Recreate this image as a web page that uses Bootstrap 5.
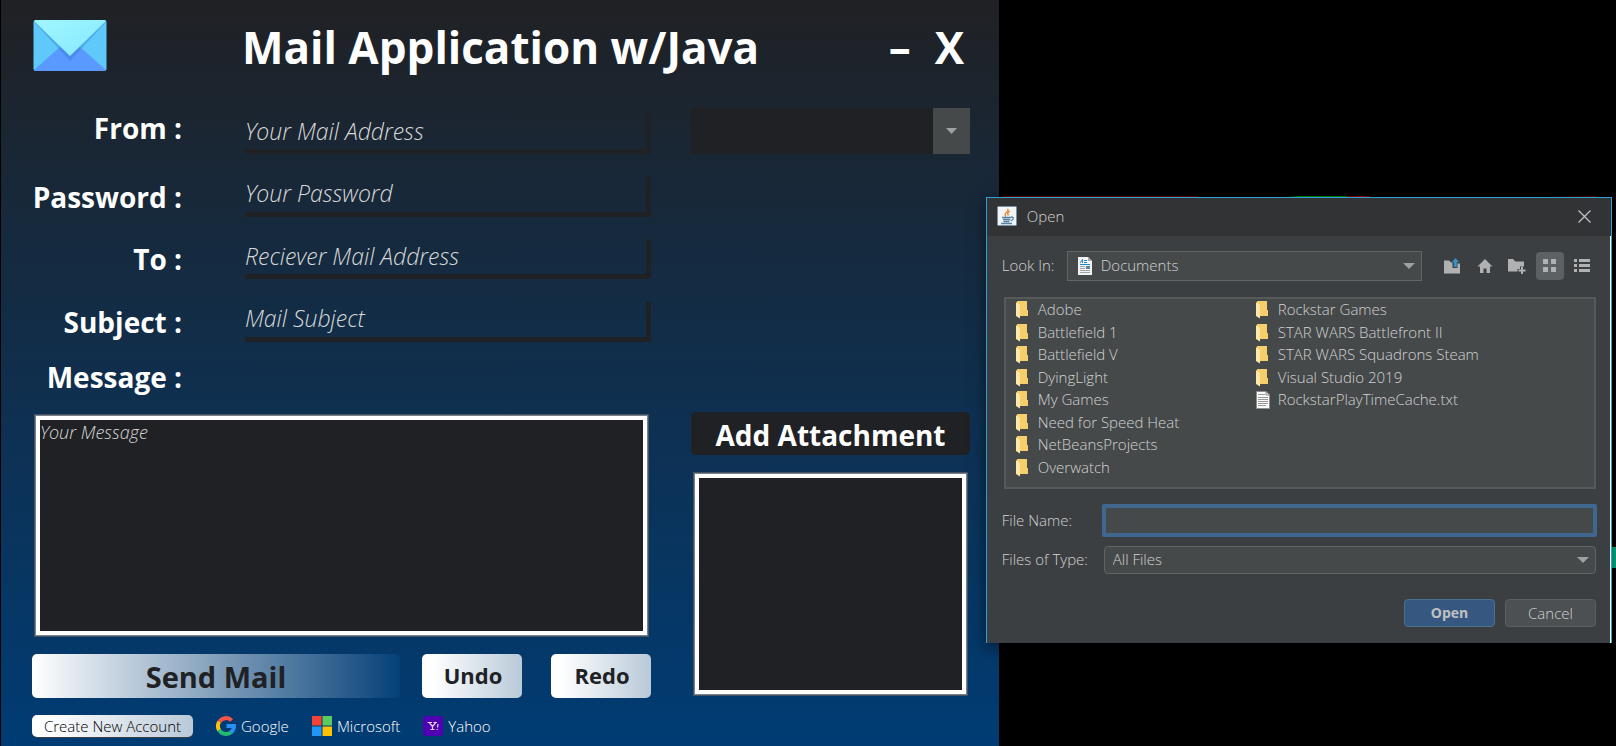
<!DOCTYPE html>
<html lang="en">
<head>
<meta charset="utf-8">
<meta name="viewport" content="width=device-width, initial-scale=1">
<title>Mail Application w/Java</title>
<link href="https://cdn.jsdelivr.net/npm/bootstrap@5.3.0/dist/css/bootstrap.min.css" rel="stylesheet">
<style>
  :root { --ink: #202124; --field: #45494a; --line: #646464; --soft: #d2d2d2; }
  body { background: #000; color: #fff; font-family: "Open Sans", "Noto Sans", sans-serif; font-size: 15px; line-height: 22px; }
  button, input, select, textarea { font-family: inherit; }

  /* Mail window */
  .mail-window { width: 61.76%; min-height: 100vh; margin-left: 1px; padding: 0 29px 8px 31px; background: linear-gradient(#202124, #003c74); }
  .title-bar { height: 92px; }
  .logo-slot { width: 210px; padding-bottom: 2px; }
  .mail-title, .win-btn { font-size: 44px; line-height: 58px; font-weight: 700; color: #fff; padding: 2px 0 0; }
  .win-btn { background: none; border: 0; }
  .min-btn { margin-right: 24px; }
  .close-btn { margin-right: 6px; }
  .form-rows { height: 234px; }
  .first-row { height: 46px; }
  .field-label { width: 150px; font-size: 28px; line-height: 40px; font-weight: 700; text-align: right; white-space: nowrap; }
  .message-label { margin: 15px 0 19px; }
  .line-input { height: 40px; margin-left: 63px; padding: 0 0 2px; background: transparent; color: #fff; border: 0 solid var(--ink); border-width: 0 5px 5px 0; font-size: 23px; font-weight: 300; font-style: italic; min-width: 0; }
  .line-input::placeholder, .message-box::placeholder { color: #d8d8d8; opacity: 1; }
  .framed { background: var(--ink); border: 4px solid #fff; border-radius: 0; box-shadow: 0 0 0 1px #77828c, 0 0 0 2px #46525f; margin: 0 4px; }
  .message-box { display: block; height: 219px; padding: 0; color: #fff; resize: none; font-size: 18px; line-height: 25px; font-weight: 300; font-style: italic; width: calc(100% - 8px); }
  .action-row { margin: 19px 0 17px; }
  .mail-btn { height: 44px; border: 0; border-radius: 5px; color: var(--ink); font-weight: 700; padding: 0; }
  .send-btn { font-size: 29px; padding-top: 2px; line-height: 42px; background: linear-gradient(to right, #fff, #054078); }
  .small-btn { width: 100px; font-size: 22px; line-height: 42px; padding: 0 0 2px 2px; background: linear-gradient(to right, #fff 10%, #b9c9d8); }
  .undo-btn { margin: 0 29px 0 22px; }
  .account-btn { width: 161px; height: 22px; padding: 0; border: 0; border-radius: 5px; color: #000; background: linear-gradient(to right, #fff 10%, #b9c9d8); box-shadow: 0 1px 0 #3c3f41; line-height: 21px; }
  .text-thin { font-size: 15px; font-weight: 300; }
  .provider-row { gap: 23px; }
  .provider { color: #fff; text-decoration: none; gap: 5px; }

  /* Side column */
  .side { width: 279px; margin-left: 40px; }
  .server-select { height: 46px; background: var(--ink); border: 0; appearance: none; color: #fff; }
  .server-arrow { width: 37px; background: var(--field); pointer-events: none; }
  .attach-btn { height: 43px; margin-top: 258px; margin-bottom: 19px; border: 0; border-radius: 5px; background: var(--ink); color: #fff; font-size: 28px; font-weight: 700; line-height: 40px; padding: 3px 0 0; }
  .attach-list { height: 220px; }

  /* File dialog */
  .open-dialog { left: 61%; right: 4px; top: 197px; border: 1px solid #2f9fd6; border-bottom: 0; color: var(--soft); background: #3c3f41; box-shadow: 0 4px 14px rgba(0, 0, 0, .5); }
  .dialog-title { height: 38px; background: #313335; padding: 0 20px 2px 10px; }
  .dialog-name { padding-left: 10px; }
  .dialog-body { padding: 15px 14px 16px 15px; border-right: 1px solid #fff; }
  .icon-btn { background: none; border: 0; padding: 0; }
  .look-label, .name-label { padding-bottom: 2px; }
  .look-label { width: 65px; }
  .dlg-select { height: 28px; background: var(--field); color: var(--soft); border: 1px solid var(--line); appearance: none; padding: 0 30px 2px 8px; }
  .look-select { height: 30px; padding-left: 33px; }
  .over-left, .over-right { top: 50%; transform: translateY(-50%); pointer-events: none; }
  .over-left { left: 11px; }
  .over-right { right: 7px; }
  .tools { width: 158px; margin-left: 16px; }
  .tool-btn { width: 28px; height: 28px; border: 0; padding: 0 0 1px; background: none; border-radius: 4px; }
  .tool-btn.chosen { background: #5c6164; }
  .file-list { height: 192px; margin: 16px 0 15px 2px; padding: 0 10px; border: 2px solid #56595a; background: var(--field); }
  .file-grid { display: grid; grid-auto-flow: column; grid-template-rows: repeat(8, 1fr); grid-template-columns: 240px 1fr; height: 180px; }
  .file-icon { width: 14px; height: 18px; margin-top: 2px; }
  .file-item { gap: 8px; line-height: 21px; white-space: nowrap; }
  .name-label { width: 100px; }
  .name-input { height: 33px; background: var(--field); border: 4px solid #3f678f; color: var(--soft); border-radius: 2px; outline: 0; margin-right: -1px; padding: 0 6px; min-width: 0; }
  .type-row { margin: 9px 0 25px; }
  .type-field { margin-left: 2px; }
  .dlg-actions { gap: 10px; }
  .dlg-btn { width: 91px; height: 28px; border: 1px solid #5e6060; border-radius: 4px; background: #4c5052; color: var(--soft); padding: 0; }
  .dlg-btn.main { background: #365880; border-color: #4c708c; color: #c0c0c0; font-weight: 700; font-size: 14px; }

  /* Slivers of the windows behind the dialog */
  .behind-top { left: 62%; right: 20px; top: 196px; height: 1px; background: linear-gradient(to right, #600 0 33%, #000 33% 48%, #080 50% 58%, #800 58% 62%, #000 62% 92%, #600); }
  .behind-side { right: 0; width: 5px; top: 547px; height: 21px; background: #00b285; }
</style>
</head>
<body>
<div class="position-relative min-vh-100 overflow-hidden">

  <main class="mail-window">
    <header class="title-bar d-flex align-items-center">
      <div class="logo-slot flex-shrink-0">
        <svg class="d-block" width="75" height="53" viewBox="0 0 75 53" aria-hidden="true">
          <defs><linearGradient id="flap" x1="0" y1="0" x2="1" y2="1"><stop offset="0" stop-color="#a0f6ff"/><stop offset="1" stop-color="#84e9ff"/></linearGradient></defs>
          <rect x="1.500" y="1" width="73" height="51" rx="2.500" fill="#5ec9fa"/>
          <path d="M2 51 28 28H48L74 51Q73 52 72 52H4Q3 52 2 51Z" fill="#5a99ff"/>
          <path d="M2 3 38 42 74 3Z" fill="#2f73c8" opacity=".35"/>
          <path d="M2 2 38 37 74 2Q73 1 72 1H4Q3 1 2 2Z" fill="url(#flap)"/>
        </svg>
      </div>
      <h1 class="mail-title m-0 flex-grow-1 text-nowrap">Mail Application w/Java</h1>
      <button class="win-btn min-btn" type="button" aria-label="Minimize">–</button>
      <button class="win-btn close-btn" type="button" aria-label="Close">X</button>
    </header>

    <div class="d-flex pt-3">
      <section class="flex-grow-1">
        <div class="form-rows d-flex flex-column justify-content-between">
          <div class="first-row d-flex">
            <label class="field-label" for="from">From :</label>
            <input class="line-input flex-grow-1 align-self-end" id="from" type="email" placeholder="Your Mail Address">
          </div>
          <div class="d-flex">
            <label class="field-label" for="pass">Password :</label>
            <input class="line-input flex-grow-1" id="pass" type="password" placeholder="Your Password">
          </div>
          <div class="d-flex">
            <label class="field-label" for="to">To :</label>
            <input class="line-input flex-grow-1" id="to" type="email" placeholder="Reciever Mail Address">
          </div>
          <div class="d-flex">
            <label class="field-label" for="subject">Subject :</label>
            <input class="line-input flex-grow-1" id="subject" type="text" placeholder="Mail Subject">
          </div>
        </div>
        <label class="field-label message-label d-block" for="message">Message :</label>
        <textarea class="framed message-box" id="message" placeholder="Your Message"></textarea>

        <div class="action-row d-flex">
          <button class="mail-btn send-btn flex-grow-1" type="button">Send Mail</button>
          <button class="mail-btn small-btn undo-btn" type="button">Undo</button>
          <button class="mail-btn small-btn" type="button">Redo</button>
        </div>

        <div class="provider-row d-flex align-items-center">
          <button class="account-btn text-thin text-nowrap" type="button">Create New Account</button>
          <a class="provider text-thin d-flex align-items-center" href="#google">
            <svg width="20" height="20" viewBox="0 0 20 20" fill="none" stroke-width="4" aria-hidden="true">
              <path d="M3.200 6A8 8 0 0 1 15.700 4.400" stroke="#f4554a"/>
              <path d="M3.200 14.200A8 8 0 0 1 3.200 5.800" stroke="#ffc107"/>
              <path d="M15.300 16A8 8 0 0 1 3.100 14" stroke="#25b876"/>
              <path d="M10.500 10H18A8 8 0 0 1 15.100 16.100" stroke="#2b90f5"/>
            </svg>Google</a>
          <a class="provider text-thin d-flex align-items-center" href="#microsoft">
            <svg width="20" height="20" viewBox="0 0 20 20" aria-hidden="true">
              <path d="M0 0H9.500V9.500H0Z" fill="#f44336"/><path d="M10.500 0H20V9.500H10.500Z" fill="#5ccb5f"/>
              <path d="M0 10.500H9.500V20H0Z" fill="#2196f3"/><path d="M10.500 10.500H20V20H10.500Z" fill="#ffc107"/>
            </svg>Microsoft</a>
          <a class="provider text-thin d-flex align-items-center" href="#yahoo">
            <svg width="20" height="20" viewBox="0 0 20 20" aria-hidden="true">
              <rect width="20" height="20" rx="3" fill="#4f00b3"/>
              <path d="M4.500 6.500H9M10.500 6.500H14M6.500 7 9.500 10.500 12.500 7M9.500 10V13.500M7.500 13.500H11.500M15 8 14.500 11.500M14.300 13V14" stroke="#e3d4f7" stroke-width="1.200" fill="none"/>
            </svg>Yahoo</a>
        </div>
      </section>

      <aside class="side flex-shrink-0">
        <div class="position-relative">
          <select class="server-select d-block w-100" aria-label="Mail server"><option></option></select>
          <span class="server-arrow position-absolute top-0 end-0 h-100 d-flex align-items-center justify-content-center">
            <svg width="11" height="6" viewBox="0 0 11 6" aria-hidden="true"><path d="M0 0H11L5.500 6Z" fill="#9da0a4"/></svg>
          </span>
        </div>
        <button class="attach-btn d-block w-100" type="button">Add Attachment</button>
        <div class="framed attach-list" role="listbox" aria-label="Attachments"></div>
      </aside>
    </div>
  </main>

  <div class="behind-top position-absolute"></div>
  <div class="behind-side position-absolute"></div>

  <section class="open-dialog position-absolute text-thin" role="dialog" aria-label="Open">
    <div class="dialog-title d-flex align-items-center">
      <svg width="20" height="20" viewBox="0 0 20 20" aria-hidden="true">
        <rect x=".5" y=".5" width="19" height="19" rx="1" fill="#f2f5f7" stroke="#7592a9"/>
        <path d="M10.500 3Q12 4.500 9.500 6.500T9 10.500M13 5Q9.500 7 11.500 9.500" stroke="#e8822d" stroke-width="1.400" fill="none"/>
        <path d="M5 11.500H14M6 13.500H13M4 17.500H15M6.500 15.500H12.500" stroke="#5382a1" stroke-width="1.500" fill="none"/>
        <path d="M14 11Q17 11 16 13T13.500 14" stroke="#5382a1" stroke-width="1.300" fill="none"/>
      </svg>
      <span class="dialog-name flex-grow-1">Open</span>
      <button class="icon-btn d-flex" type="button" aria-label="Close">
        <svg width="13" height="13" viewBox="0 0 13 13" aria-hidden="true"><path d="M.5.5 12.500 12.500M12.500.5.5 12.500" stroke="#c4c4c4" stroke-width="1.200"/></svg>
      </button>
    </div>

    <div class="dialog-body">
      <div class="d-flex align-items-center">
        <label class="look-label" for="look">Look In:</label>
        <div class="position-relative flex-grow-1">
          <select class="dlg-select look-select text-thin d-block w-100" id="look"><option>Documents</option></select>
          <svg class="over-left position-absolute" width="14" height="18" viewBox="0 0 14 18" aria-hidden="true">
            <path d="M0 0H10L14 4V18H0Z" fill="#f4f4f4"/><path d="M10 0V4H14Z" fill="#aaa"/>
            <path d="M2 6 4.500 2.500V6M6 3.500H9M6 5.500H9M2 7.500H12" stroke="#1e88d2" fill="none"/>
            <path d="M2 9.500H7M2 11.500H7M2 13.500H12M2 15.500H12" stroke="#9da3a8"/><path d="M8 9H12V12H8Z" fill="#5b86a3"/>
          </svg>
          <svg class="over-right position-absolute" width="12" height="6" viewBox="0 0 12 6" aria-hidden="true"><path d="M0 0H12L6 6Z" fill="#9da0a4"/></svg>
        </div>
        <div class="tools d-flex justify-content-between">
          <button class="tool-btn d-flex align-items-center justify-content-center" type="button" aria-label="Up one level">
            <svg width="16" height="16" viewBox="0 0 16 16" aria-hidden="true"><path d="M0 2.500H5L7 4.500H8.500V10H13.500V5.500H16V15.500H0Z" fill="#afb1b3"/><path d="M11.500 0 15 4H12.800V9H9.800V4H8Z" fill="#3592c4"/></svg>
          </button>
          <button class="tool-btn d-flex align-items-center justify-content-center" type="button" aria-label="Home">
            <svg width="16" height="16" viewBox="0 0 16 16" aria-hidden="true"><path d="M8 1 15.500 8.500H13V15H9.500V10.500H6.500V15H3V8.500H.5Z" fill="#afb1b3"/></svg>
          </button>
          <button class="tool-btn d-flex align-items-center justify-content-center" type="button" aria-label="New folder">
            <svg width="18" height="17" viewBox="0 0 18 17" aria-hidden="true"><path d="M0 2H5L7.500 4.500H16V9.500H12V12H9.500V14.500H0Z" fill="#afb1b3"/><path d="M14 10V17M10.500 13.500H17.500" stroke="#afb1b3" stroke-width="2"/></svg>
          </button>
          <button class="tool-btn chosen d-flex align-items-center justify-content-center" type="button" aria-label="List view">
            <svg width="13" height="13" viewBox="0 0 13 13" aria-hidden="true"><path d="M0 0H5V5H0ZM8 0H13V5H8ZM0 8H5V13H0ZM8 8H13V13H8Z" fill="#afb1b3"/></svg>
          </button>
          <button class="tool-btn d-flex align-items-center justify-content-center" type="button" aria-label="Details view">
            <svg width="16" height="13" viewBox="0 0 16 13" aria-hidden="true"><path d="M0 0H3V3H0ZM5 0H16V3H5ZM0 5H3V8H0ZM5 5H16V8H5ZM0 10H3V13H0ZM5 10H16V13H5Z" fill="#afb1b3"/></svg>
          </button>
        </div>
      </div>

      <svg class="d-none" aria-hidden="true">
        <symbol id="folder" viewBox="0 0 14 18"><path d="M1 0H11V9H12V15H1Z" fill="#f6cf6b"/><path d="M0 1 4 4V17.500L0 15Z" fill="#ffe9a8"/></symbol>
        <symbol id="page" viewBox="0 0 14 18"><path d="M.5.5H10L13.500 4V17.500H.5Z" fill="#fafafa" stroke="#8e8e8e"/><path d="M10 .5V4H13.500" fill="none" stroke="#8e8e8e"/><path d="M2 3.500H9M2 6.500H12M2 8.500H12M2 10.500H12M2 12.500H12M2 14.500H10" stroke="#999"/></symbol>
      </svg>
      <div class="file-list">
        <ul class="file-grid list-unstyled m-0" id="files"></ul>
      </div>

      <div class="d-flex align-items-center">
        <label class="name-label" for="fname">File Name:</label>
        <input class="name-input flex-grow-1" id="fname" type="text">
      </div>
      <div class="type-row d-flex align-items-center">
        <label class="name-label" for="ftype">Files of Type:</label>
        <div class="type-field position-relative flex-grow-1">
          <select class="dlg-select text-thin d-block w-100 rounded-1" id="ftype"><option>All Files</option></select>
          <svg class="over-right position-absolute" width="12" height="6" viewBox="0 0 12 6" aria-hidden="true"><path d="M0 0H12L6 6Z" fill="#9da0a4"/></svg>
        </div>
      </div>
      <div class="dlg-actions d-flex justify-content-end">
        <button class="dlg-btn main" type="button">Open</button>
        <button class="dlg-btn text-thin" type="button">Cancel</button>
      </div>
    </div>
  </section>
</div>

<script>
  const files = ['Adobe', 'Battlefield 1', 'Battlefield V', 'DyingLight', 'My Games', 'Need for Speed Heat',
    'NetBeansProjects', 'Overwatch', 'Rockstar Games', 'STAR WARS Battlefront II', 'STAR WARS Squadrons Steam',
    'Visual Studio 2019', 'RockstarPlayTimeCache.txt'];
  document.getElementById('files').innerHTML = files.map(name =>
    `<li class="file-item d-flex align-items-start"><svg class="file-icon" aria-hidden="true"><use href="#${name.endsWith('.txt') ? 'page' : 'folder'}"/></svg>${name}</li>`).join('');
</script>
<script src="https://cdn.jsdelivr.net/npm/bootstrap@5.3.0/dist/js/bootstrap.bundle.min.js"></script>
</body>
</html>
